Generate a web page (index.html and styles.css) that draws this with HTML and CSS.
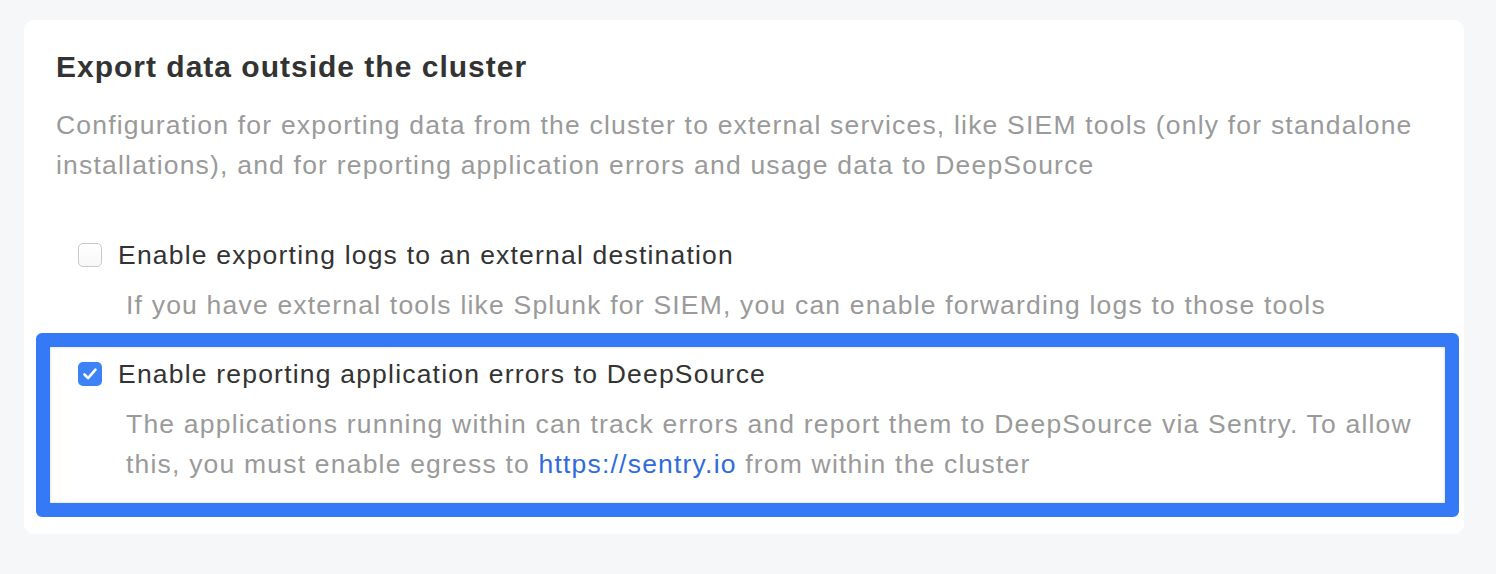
FILE: index.html
```html
<!DOCTYPE html>
<html lang="en">
<head>
  <meta charset="UTF-8">
  <meta name="viewport" content="width=device-width, initial-scale=1.0">
  <title>Export data</title>
  <link rel="stylesheet" href="styles.css">
</head>
<body>
  <div class="card">
    <h2 class="title">Export data outside the cluster</h2>
    <p class="description">Configuration for exporting data from the cluster to external services, like SIEM tools (only for standalone installations), and for reporting application errors and usage data to DeepSource</p>

    <div class="option">
      <label class="option-label">
        <span class="checkbox"></span>
        <span>Enable exporting logs to an external destination</span>
      </label>
      <p class="option-help">If you have external tools like Splunk for SIEM, you can enable forwarding logs to those tools</p>
    </div>

    <div class="option option-highlight">
      <label class="option-label">
        <span class="checkbox checkbox-checked">
          <svg width="24" height="24" viewBox="0 0 24 24"><path d="M6.5 12.5l3.6 3.6 7.4-8.4" fill="none" stroke="#fff" stroke-width="2.6" stroke-linecap="round" stroke-linejoin="round"/></svg>
        </span>
        <span>Enable reporting application errors to DeepSource</span>
      </label>
      <p class="option-help">The applications running within can track errors and report them to DeepSource via Sentry. To allow this, you must enable egress to <a href="#" class="link">https://sentry.io</a> from within the cluster</p>
    </div>
  </div>
</body>
</html>
```

FILE: styles.css
```css
body {
  margin: 0;
  background-color: #f6f7f9;
  font-family: 'Liberation Sans', Arial, Helvetica, sans-serif;
  color: #333;
}

.card {
  margin: 20px 0 0 24px;
  width: 1440px;
  box-sizing: border-box;
  background-color: #fff;
  border-radius: 10px;
  padding: 29px 32px 17px 32px;
}

.title {
  margin: 0 0 20px 0;
  font-size: 30px;
  line-height: 36px;
  letter-spacing: 1px;
  font-weight: bold;
  color: #333;
}

.description {
  margin: 0;
  font-size: 26.5px;
  line-height: 40px;
  letter-spacing: 1.2px;
  color: #9a9a9a;
}

.option {
  margin-top: 50px;
  padding-left: 22px;
}

.option-label {
  display: flex;
  align-items: center;
  gap: 16px;
  font-size: 26.5px;
  line-height: 40px;
  letter-spacing: 1.2px;
  color: #333;
  cursor: pointer;
}

.checkbox {
  width: 24px;
  height: 24px;
  box-sizing: border-box;
  border: 1px solid #c9c9c9;
  border-radius: 5px;
  background: linear-gradient(#fff, #f7f7f7);
  flex-shrink: 0;
}

.checkbox-checked {
  border: none;
  background: #3d82f6;
}

.checkbox-checked svg {
  display: block;
}

.option-help {
  margin: 10px 0 0 48px;
  font-size: 26.5px;
  line-height: 40.5px;
  letter-spacing: 1.2px;
  color: #9a9a9a;
}

.option-highlight {
  margin: 7px -27px 0 -20px;
  border: 14px solid #3579f6;
  border-radius: 6px;
  padding: 7px 28px 18px 28px;
  box-shadow: inset 0 0 3px rgba(0, 0, 0, 0.18);
}

.link {
  color: #2f6bdc;
  text-decoration: none;
}
```
